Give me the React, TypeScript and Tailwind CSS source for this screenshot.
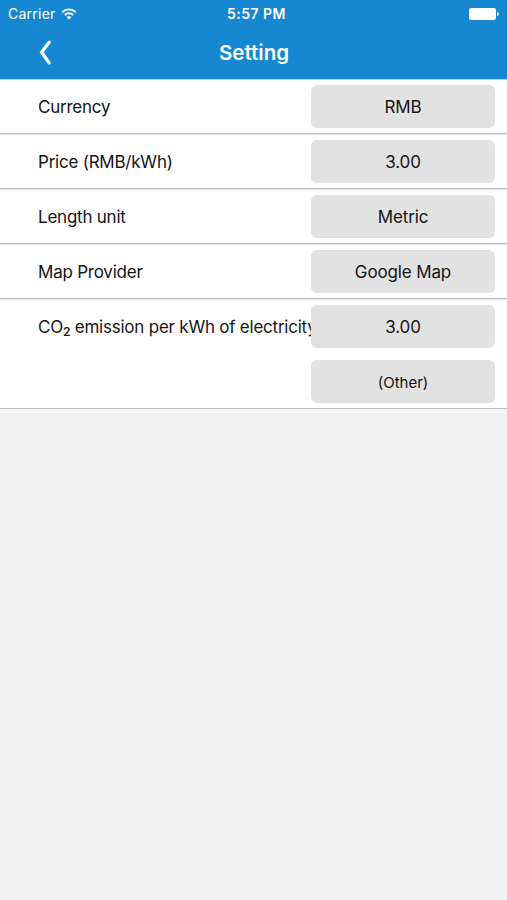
import type { ReactNode } from 'react'

const ValueButton = ({ children }: { children: ReactNode }) => (
  <button className="h-[43px] w-[184px] shrink-0 rounded-md bg-[#e2e2e2] pt-0.5 text-center text-[17px] tracking-[-0.13px]">
    {children}
  </button>
)

const Label = ({ children }: { children: ReactNode }) => (
  <div className="w-[273px] shrink-0 pt-0.5 text-[17px] tracking-[-0.23px] whitespace-nowrap">
    {children}
  </div>
)

const Row = ({ label, value }: { label: string; value: string }) => (
  <div className="h-[55px] border-b border-[#bebebe] pt-[6px] pr-3 pl-[38px] shadow-[0_1px_#e6e6e6]">
    <div className="flex h-[43px] items-center">
      <Label>{label}</Label>
      <ValueButton>{value}</ValueButton>
    </div>
  </div>
)

export default function App() {
  return (
    <div className="h-[900px] w-[507px] overflow-hidden bg-[#f4f4f4] font-['Inter','Liberation_Sans',sans-serif] text-[#151515]">
      <header className="relative h-[79px] bg-[#1588d1] text-white shadow-[0_1px_#b9d2e3]">
        <div className="grid h-[27px] grid-cols-3 items-center px-2 text-[14px]">
          <div className="flex items-center gap-[5px]">
            <span className="tracking-[0.25px]">Carrier</span>
            <svg width="16" height="12" viewBox="0 0 16 12" fill="none" stroke="currentColor" strokeWidth="1.9">
              <path d="M1.2 4.2a9.7 9.7 0 0 1 13.6 0M3.8 7a6 6 0 0 1 8.4 0" />
              <path d="M8 11.5 5.7 9.2a3.3 3.3 0 0 1 4.6 0Z" fill="currentColor" stroke="none" />
            </svg>
          </div>
          <span className="pl-1.5 text-center text-[14px] font-semibold tracking-[0.5px] whitespace-nowrap">
            5:57 PM
          </span>
          <div className="flex items-center justify-end">
            <span className="h-3 w-[27px] rounded-[2px] bg-white" />
            <span className="ml-px h-1 w-[2px] rounded-r bg-white" />
          </div>
        </div>
        <div className="grid h-[52px] grid-cols-3 items-center">
          <svg className="ml-[38px]" width="14" height="26" viewBox="0 0 14 26" fill="none" stroke="currentColor" strokeWidth="3.2" strokeLinecap="round">
            <path d="M11.2 2.2 3.6 12.2l7.6 10.8" />
          </svg>
          <h1 className="pl-px text-center text-[20.5px] font-semibold">Setting</h1>
        </div>
      </header>

      <main className="bg-white">
        <Row label="Currency" value="RMB" />
        <Row label="Price (RMB/kWh)" value="3.00" />
        <Row label="Length unit" value="Metric" />
        <Row label="Map Provider" value="Google Map" />
        <div className="h-[110px] border-b border-[#bebebe] pt-[6px] pr-3 pl-[38px]">
          <div className="flex h-[43px] items-center">
            <Label>
              CO<span className="relative top-[3px] text-[12px] font-semibold">2</span> emission per kWh of electricity
            </Label>
            {/* sits over the end of the long label */}
            <div className="relative flex">
              <ValueButton>3.00</ValueButton>
            </div>
          </div>
          <div className="mt-3 flex h-[43px] items-center justify-end">
            <ValueButton>
              <span className="text-[15px] tracking-normal">(Other)</span>
            </ValueButton>
          </div>
        </div>
      </main>
    </div>
  )
}
